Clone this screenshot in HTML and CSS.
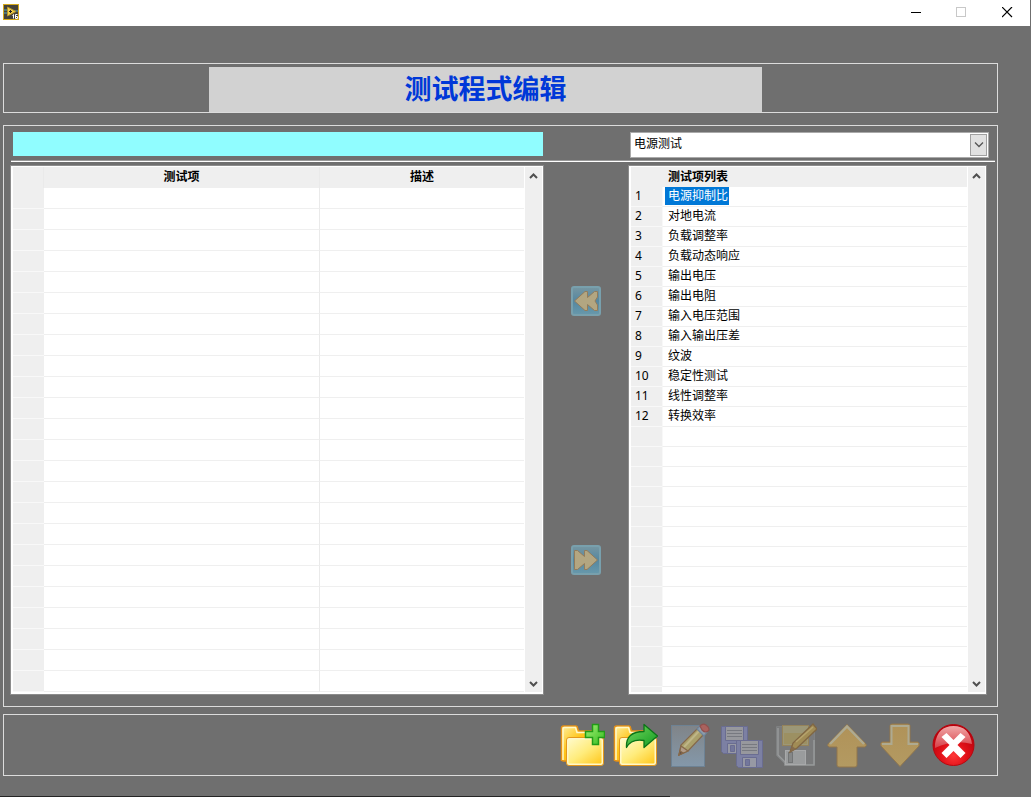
FILE: index.html
```
<!DOCTYPE html>
<html lang="zh-CN">
<head>
<meta charset="utf-8">
<title>测试程式编辑</title>
<link rel="stylesheet" href="styles.css">
</head>
<body>
<svg class="defs" width="0" height="0" aria-hidden="true">
  <defs>
    <linearGradient id="folderBack" x1="0" y1="0" x2="1" y2="1"><stop offset="0" stop-color="#fff0a0"/><stop offset=".4" stop-color="#ffc61c"/><stop offset="1" stop-color="#f5a800"/></linearGradient>
    <linearGradient id="folderFront" x1="0" y1="0" x2="1" y2="1"><stop offset="0" stop-color="#fffac8"/><stop offset=".5" stop-color="#ffec7c"/><stop offset="1" stop-color="#ffc81e"/></linearGradient>
    <linearGradient id="green" x1="0" y1="0" x2="1" y2="1"><stop offset="0" stop-color="#a4f078"/><stop offset="1" stop-color="#34bc1c"/></linearGradient>
    <linearGradient id="greenArrow" x1="0" y1="0" x2="1" y2="1"><stop offset="0" stop-color="#78d860"/><stop offset="1" stop-color="#109c20"/></linearGradient>
    <linearGradient id="page" x1="0" y1="0" x2="0" y2="1"><stop offset="0" stop-color="#808488"/><stop offset="1" stop-color="#8498aa"/></linearGradient>
    <linearGradient id="tan" x1="0" y1="0" x2="0" y2="1"><stop offset="0" stop-color="#b09258"/><stop offset="1" stop-color="#b39a62"/></linearGradient>
    <radialGradient id="red" cx=".5" cy=".75" r=".65"><stop offset="0" stop-color="#ff3838"/><stop offset=".5" stop-color="#e01018"/><stop offset="1" stop-color="#b8000c"/></radialGradient>
    <linearGradient id="shine" x1="0" y1="0" x2="0" y2="1"><stop offset="0" stop-color="#f0a8a8"/><stop offset="1" stop-color="#d84048"/></linearGradient>
    <linearGradient id="blueTile" x1="0" y1="0" x2="0" y2="1"><stop offset="0" stop-color="#7797a2"/><stop offset=".5" stop-color="#5587a0"/><stop offset="1" stop-color="#6899ac"/></linearGradient>
  </defs>
</svg>

<header class="titlebar">
  <svg class="app-icon" width="16" height="16" viewBox="0 0 16 16" role="img" aria-label="LabVIEW">
    <rect x=".5" y=".5" width="15" height="15" fill="#454238" stroke="#d5a91c"/>
    <path d="M1 6h4M1 9h4M11 7h4" stroke="#4d8790" stroke-width="1.500"/>
    <path d="M4.500 3v9l8.500-4.500z" fill="#f3cf46" stroke="#b1912d"/>
    <path d="M6 7.500h3M7.500 6v3" stroke="#222"/>
    <path d="M9.500 11.500l1-1v4M14.500 10.500h-2v4h2v-2h-2" fill="none" stroke="#fff"/>
  </svg>
  <div class="window-controls">
    <button class="window-button" aria-label="最小化"><svg width="12" height="12"><path d="M1 5.500h10" stroke="#000"/></svg></button>
    <button class="window-button" aria-label="最大化" disabled><svg width="12" height="12"><rect x=".5" y=".5" width="9" height="9" fill="none" stroke="#c8c8c8"/></svg></button>
    <button class="window-button" aria-label="关闭"><svg width="12" height="12"><path d="M0 0l10 10M10 0l-10 10" stroke="#000" stroke-width="1.200"/></svg></button>
  </div>
</header>

<main class="workspace">
  <section class="panel heading-panel"><h1 class="heading">测试程式编辑</h1></section>

  <section class="panel editor">
    <div class="columns fields">
      <input class="program-name" type="text" aria-label="程式名称" readonly>
      <div class="category">
        <select class="category-select" aria-label="测试类别"><option>电源测试</option></select>
        <span class="category-arrow"><svg width="10" height="6"><path d="M1 .5l4 4 4-4" fill="none" stroke="#555" stroke-width="1.300"/></svg></span>
      </div>
    </div>
    <hr class="rule">
    <div class="columns lists">
      <div class="list-box">
        <table class="list steps">
          <colgroup><col class="col-index"><col class="col-step"><col class="col-desc"></colgroup>
          <thead><tr><th></th><th>测试项</th><th>描述</th></tr></thead>
          <tbody>
            <tr><th></th><td></td><td></td></tr><tr><th></th><td></td><td></td></tr>
            <tr><th></th><td></td><td></td></tr><tr><th></th><td></td><td></td></tr>
            <tr><th></th><td></td><td></td></tr><tr><th></th><td></td><td></td></tr>
            <tr><th></th><td></td><td></td></tr><tr><th></th><td></td><td></td></tr>
            <tr><th></th><td></td><td></td></tr><tr><th></th><td></td><td></td></tr>
            <tr><th></th><td></td><td></td></tr><tr><th></th><td></td><td></td></tr>
            <tr><th></th><td></td><td></td></tr><tr><th></th><td></td><td></td></tr>
            <tr><th></th><td></td><td></td></tr><tr><th></th><td></td><td></td></tr>
            <tr><th></th><td></td><td></td></tr><tr><th></th><td></td><td></td></tr>
            <tr><th></th><td></td><td></td></tr><tr><th></th><td></td><td></td></tr>
            <tr><th></th><td></td><td></td></tr><tr><th></th><td></td><td></td></tr>
            <tr><th></th><td></td><td></td></tr><tr><th></th><td></td><td></td></tr>
          </tbody>
        </table>
        <div class="scrollbar">
          <button class="scroll-button" aria-label="向上滚动"><svg width="9" height="6"><path d="M1 5l3.500-3.500L8 5" fill="none" stroke="#505050" stroke-width="2"/></svg></button>
          <button class="scroll-button" aria-label="向下滚动"><svg width="9" height="6"><path d="M1 1l3.500 3.500L8 1" fill="none" stroke="#505050" stroke-width="2"/></svg></button>
        </div>
      </div>

      <div class="transfer">
        <button class="icon-button" aria-label="添加"><svg width="30" height="30" viewBox="0 0 30 30"><rect x="1" y="1" width="28" height="28" rx="2" fill="url(#blueTile)" stroke="#78a0ad" stroke-width="2"/><path d="M3.500 15L14 5.500h2.500v6l7-6h3v5.500L24 15l2.500 4v5.500h-3l-7-6v6H14z" fill="#b3a681" stroke="#927c5c"/></svg></button>
        <button class="icon-button" aria-label="移除"><svg width="30" height="30" viewBox="0 0 30 30"><rect x="1" y="1" width="28" height="28" rx="2" fill="url(#blueTile)" stroke="#78a0ad" stroke-width="2"/><path d="M26.500 15L16 5.500h-2.500v6l-7-6h-3v5.500L3.500 19v5.500h3l7-6v6H16z" fill="#b3a681" stroke="#927c5c"/></svg></button>
      </div>

      <div class="list-box">
        <table class="list catalog">
          <colgroup><col class="col-number"><col></colgroup>
          <thead><tr><th></th><th>测试项列表</th></tr></thead>
          <tbody>
            <tr><th>1</th><td><span class="selected">电源抑制比</span></td></tr>
            <tr><th>2</th><td>对地电流</td></tr>
            <tr><th>3</th><td>负载调整率</td></tr>
            <tr><th>4</th><td>负载动态响应</td></tr>
            <tr><th>5</th><td>输出电压</td></tr>
            <tr><th>6</th><td>输出电阻</td></tr>
            <tr><th>7</th><td>输入电压范围</td></tr>
            <tr><th>8</th><td>输入输出压差</td></tr>
            <tr><th>9</th><td>纹波</td></tr>
            <tr><th>10</th><td>稳定性测试</td></tr>
            <tr><th>11</th><td>线性调整率</td></tr>
            <tr><th>12</th><td>转换效率</td></tr>
            <tr><th></th><td></td></tr><tr><th></th><td></td></tr><tr><th></th><td></td></tr>
            <tr><th></th><td></td></tr><tr><th></th><td></td></tr><tr><th></th><td></td></tr>
            <tr><th></th><td></td></tr><tr><th></th><td></td></tr><tr><th></th><td></td></tr>
            <tr><th></th><td></td></tr><tr><th></th><td></td></tr><tr><th></th><td></td></tr>
            <tr><th></th><td></td></tr>
          </tbody>
        </table>
        <div class="scrollbar">
          <button class="scroll-button" aria-label="向上滚动"><svg width="9" height="6"><path d="M1 5l3.500-3.500L8 5" fill="none" stroke="#505050" stroke-width="2"/></svg></button>
          <button class="scroll-button" aria-label="向下滚动"><svg width="9" height="6"><path d="M1 1l3.500 3.500L8 1" fill="none" stroke="#505050" stroke-width="2"/></svg></button>
        </div>
      </div>
    </div>
  </section>

  <section class="panel toolbar">
    <button class="icon-button" aria-label="新建">
      <svg width="46" height="46" viewBox="0 0 46 46"><path d="M2.500 39V6q0-2 2-2h12q2 0 2 2l1 3h17q2 0 2 2v28H4.500q-2 0-2-2z" fill="url(#folderBack)" stroke="#e49018" stroke-width="1.500"/><path d="M4 38V7q0-1.500 1.500-1.500h11l1.500 5h20" fill="none" stroke="#fff8c8" stroke-width="1.500"/><rect x="7.500" y="15.500" width="37" height="28" rx="2.500" fill="#fff8c8" stroke="#e4981c"/><rect x="9.500" y="17.500" width="33" height="24" rx="1" fill="url(#folderFront)"/><path d="M33.500 2.500h6v7h6v6h-6v7h-6v-7h-7v-6h7z" fill="url(#green)" stroke="#229c18" stroke-width="1.500"/></svg>
    </button>
    <button class="icon-button" aria-label="打开">
      <svg width="46" height="46" viewBox="0 0 46 46"><path d="M2.500 39V6q0-2 2-2h12q2 0 2 2l1 3h17q2 0 2 2v28H4.500q-2 0-2-2z" fill="url(#folderBack)" stroke="#e49018" stroke-width="1.500"/><path d="M4 38V7q0-1.500 1.500-1.500h11l1.500 5h20" fill="none" stroke="#fff8c8" stroke-width="1.500"/><rect x="7.500" y="15.500" width="37" height="28" rx="2.500" fill="#fff8c8" stroke="#e4981c"/><rect x="9.500" y="17.500" width="33" height="24" rx="1" fill="url(#folderFront)"/><path d="M14.500 25.500Q13.500 9.500 32 9.500V2.500L45.500 14 32 25.500v-7q-13-2-17.500 7z" fill="url(#greenArrow)" stroke="#0b7418" stroke-width="1.300" stroke-linejoin="round"/></svg>
    </button>
    <button class="icon-button" aria-label="编辑">
      <svg width="46" height="46" viewBox="0 0 46 46"><rect x="6.500" y="3.500" width="33" height="41" fill="url(#page)" stroke="#6d8294"/><g stroke="#85684a" stroke-width="1.200"><path d="M14 33l2-10L33 6l6 6-16 17z" fill="#aaa06b"/><path d="M19 25L35 8" stroke="#beb587" stroke-width="2"/><path d="M14 33l2-9 7 5z" fill="#b09b88"/><path d="M14 33l1-4 3 2z" fill="#594844"/><path d="M32 7l3-3 7 6-3 4z" fill="#8d9dac" stroke="#6f839a"/><path d="M35 4q3-3 6-1t3 5q-3 4-7 0z" fill="#aa625e" stroke="#92504e"/></g></svg>
    </button>
    <button class="icon-button" aria-label="另存为">
      <svg width="46" height="46" viewBox="0 0 46 46"><g id="disk" stroke="#6a6d91"><path d="M3.500 4.500h26v27h-24l-2-2z" fill="#7c80a3"/><path d="M7.500 4.500h18v14h-18z" fill="#97989d"/><path d="M9 8.500h15M9 11.500h15M9 14.500h15" stroke="#777980"/><path d="M9.500 21.500h14v10h-14z" fill="#9799a4"/><path d="M12.500 23.500h4v6h-4z" fill="#73779c"/></g><use href="#disk" x="15" y="14"/></svg>
    </button>
    <button class="icon-button" aria-label="保存">
      <svg width="46" height="46" viewBox="0 0 46 46"><path d="M5.500 4.500h38v38h-29l-9-9z" fill="#7a7b7c" stroke="#7f8182"/><path d="M7 6v27l7 7v3h29V18" fill="none" stroke="#989a9b" stroke-width="1.500"/><rect x="11.500" y="3.500" width="26" height="20" fill="#9c9777" stroke="#95835a"/><path d="M13 11h23v11H13z" fill="#9c9062"/><rect x="14.500" y="28.500" width="20" height="14" fill="#9a9c9d" stroke="#a8a9aa"/><rect x="17.500" y="30.500" width="4" height="10" fill="#858788" stroke="#737576"/><path d="M19 30l3-9L42 2l4 5-20 19z" fill="#a18c55" stroke="#806743" stroke-width="1.300"/><path d="M19 30l2-6 4 3z" fill="#856b4c"/><path d="M25 20L42 5" stroke="#b5a36d" stroke-width="1.500"/></svg>
    </button>
    <button class="icon-button" aria-label="上移">
      <svg width="46" height="46" viewBox="0 0 46 46"><path d="M23 2.500L42 22q1 2-1 3h-8v18q0 2-2 2H15q-2 0-2-2V25H5q-2-1-1-3z" fill="url(#tan)" stroke="#92774d"/><path d="M6 22L23 4.500 40 22" fill="none" stroke="#aeaa91" stroke-width="2.500"/></svg>
    </button>
    <button class="icon-button" aria-label="下移">
      <svg width="46" height="46" viewBox="0 0 46 46"><path d="M23 44.500L42 24q1-3-1-4h-8V4q0-2-2-2H15q-2 0-2 2v16H5q-2 1-1 4z" fill="url(#tan)" stroke="#92774d"/><path d="M5 22h9.500V4h17v18H41" fill="none" stroke="#aeaa91" stroke-width="2"/></svg>
    </button>
    <button class="icon-button" aria-label="退出">
      <svg width="46" height="46" viewBox="0 0 46 46"><circle cx="23.500" cy="23" r="20.500" fill="url(#red)" stroke="#b60810"/><path d="M5 22Q7.500 4 23.500 4T42 22Q23.500 17 5 26z" fill="url(#shine)"/><path d="M11.500 15l5-4 7 7 7-7 5 4-8 8 8 8-5 5-7-7-7 7-5-5 8-8z" fill="#fff"/></svg>
    </button>
  </section>
</main>
<footer class="window-edge"></footer>
</body>
</html>
```
FILE: styles.css
```
* { box-sizing: border-box; }

body {
  margin: 0;
  min-height: 100vh;
  display: flex;
  flex-direction: column;
  background: #6f6f6f;
  color: #000;
  font: 12px/20px "Noto Sans", "Noto Sans CJK SC", sans-serif;
}

button { margin: 0; padding: 0; border: 0; background: none; }
svg { display: block; }
.defs { position: absolute; }

.titlebar {
  display: flex;
  justify-content: space-between;
  align-items: center;
  height: 26px;
  padding-left: 3px;
  background: #fff;
  border-right: 1px solid #6f6f6f;
}
.app-icon { margin-bottom: 2px; }
.window-controls { display: flex; height: 100%; }
.window-button { width: 46px; padding: 7px 17px 7px 18px; }

.workspace { flex: 1; padding: 37px 33px 0 3px; }
.panel { border: 1px solid #dcdcdc; }

.heading-panel { display: grid; grid-template-columns: 205fr 553fr 235fr; padding-top: 3px; }
.heading {
  grid-column: 2;
  margin: 0;
  padding-bottom: 3px;
  background: #d2d2d2;
  color: #0038d8;
  font: bold 27px/42px "Noto Sans CJK SC", sans-serif;
  text-align: center;
}

.editor { margin-top: 12px; padding: 6px 2px 11px 6px; }
.columns {
  display: grid;
  grid-template-columns: 534fr 84px 359fr;
  padding-right: 8px;
}
.program-name {
  width: auto;
  height: 24px;
  margin: 0 1px 0 3px;
  padding: 0 4px;
  border: 0;
  background: #90fdff;
  font: inherit;
}
.category { position: relative; grid-column: 3; margin: 0 -2px 0 2px; }
.category-select {
  display: block;
  width: 100%;
  height: 26px;
  padding: 0 22px 2px 3px;
  border: 1px solid #aaa;
  border-radius: 0;
  background: #fff;
  color: #000;
  font: inherit;
  appearance: none;
}
.category-arrow {
  position: absolute;
  top: 2px;
  right: 2px;
  bottom: 2px;
  width: 17px;
  display: grid;
  place-items: center;
  border: 1px solid #a0a0a0;
  background: #e1e1e1;
  pointer-events: none;
}
.rule {
  height: 2px;
  margin: 2px 0 3px 1px;
  border: 0;
  border-top: 1px solid #9a9a9a;
  background: #fff;
}

.list-box {
  display: flex;
  gap: 1px;
  align-items: stretch;
  padding: 1px 1px 2px 2px;
  border: 1px solid #8c8c8c;
  background: linear-gradient(#efefef, #efefef) 2px 1px / 31px calc(100% - 3px) no-repeat #fff;
}
.list { flex: 1; align-self: flex-start; table-layout: fixed; border-collapse: separate; border-spacing: 0; }
.list th, .list td { height: 21px; padding: 0; line-height: 18px; vertical-align: top; }
.list thead th { padding-top: 1px; background: #efefef; }
.list tbody th {
  padding-left: 4px;
  border-bottom: 1px solid #f8f8f8;
  background: #efefef;
  font-weight: normal;
  text-align: left;
}
.list td { border-bottom: 1px solid #efefef; background: #fff; }
.col-index { width: 31px; }
.col-step { width: 54%; }
.col-number { width: 31px; }
.steps td:nth-child(2), .steps thead th:nth-child(-n+2) { border-right: 1px solid #eaeaea; }
.catalog th, .catalog td { height: 20px; }
.catalog td { padding-left: 5px; border-left: 1px solid #f8f8f8; }
.catalog thead th:last-child { padding-left: 6px; text-align: left; }
.selected {
  display: inline-block;
  margin-left: -3px;
  padding: 0 1px 0 3px;
  background: #0078d7;
  color: #fff;
}

.scrollbar {
  flex: 0 0 17px;
  display: flex;
  flex-direction: column;
  justify-content: space-between;
  background: #efefef;
}
.scroll-button { height: 17px; display: grid; place-items: center; }

.transfer { display: flex; flex-direction: column; align-items: center; gap: 229px; padding-top: 121px; }

.toolbar {
  display: flex;
  justify-content: flex-end;
  gap: 7px;
  margin-top: 7px;
  padding: 7px 21px 7px 0;
}

.window-edge { width: 65%; height: 1px; background: #252525; }
```
